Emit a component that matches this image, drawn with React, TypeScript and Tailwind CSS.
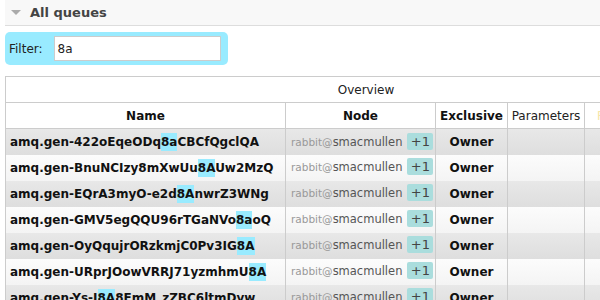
import React from "react";

const rows: [string, string, string][] = [
  ["amq.gen-422oEqeODq", "8a", "CBCfQgclQA"],
  ["amq.gen-BnuNCIzy8mXwUu", "8A", "Uw2MzQ"],
  ["amq.gen-EQrA3myO-e2d", "8A", "nwrZ3WNg"],
  ["amq.gen-GMV5egQQU96rTGaNVo", "8a", "oQ"],
  ["amq.gen-OyQqujrORzkmjC0Pv3IG", "8A", ""],
  ["amq.gen-URprJOowVRRJ71yzmhmU", "8A", ""],
  ["amq.gen-Ys-J", "8A", "8EmM_zZBC6ltmDyw"],
];

export default function App() {
  return (
    <div className="w-[600px] h-[300px] overflow-hidden bg-white text-[12px] font-['DejaVu_Sans',Verdana,sans-serif] text-[#444]">
      {/* --- section header --- */}
      <div className="ml-[5px] h-[26px] flex items-center gap-[9px] pl-[6px] bg-[#f8f8f8] border-b border-[#ddd]">
        <svg width="10" height="6" viewBox="0 0 10 6">
          <polygon points="0,0 10,0 5,5" fill="#aaa" />
        </svg>
        <span className="font-bold text-[13px] text-[#444]">All queues</span>
      </div>

      {/* --- filter --- */}
      <div className="ml-[5px] mt-[6px] w-[223px] h-[33px] rounded-[5px] bg-[#99ebff] flex items-center pl-[4px] gap-[11px]">
        <span className="text-[#222]">Filter:</span>
        <div className="w-[167px] h-[25px] bg-white border border-[#ccc] flex items-center pl-[3px] text-[#222]">
          8a
        </div>
      </div>

      {/* --- table --- */}
      <div className="ml-[5px] mt-[11px]">
        <table className="border-collapse table-fixed w-[800px]">
          <colgroup>
            <col className="w-[280px]" />
            <col className="w-[150px]" />
            <col className="w-[72px]" />
            <col className="w-[77px]" />
            <col className="w-[221px]" />
          </colgroup>
          <thead>
            <tr className="h-[26px]">
              <th colSpan={5} className="border border-[#ccc] font-normal text-[#222] text-left">
                <span className="inline-block w-[720px] text-center">Overview</span>
              </th>
            </tr>
            <tr className="h-[26px]">
              <th className="border border-[#ccc] text-[#111]">Name</th>
              <th className="border border-[#ccc] text-[#111]">Node</th>
              <th className="border border-[#ccc] text-[#111]">Exclusive</th>
              <th className="border border-[#ccc] font-normal text-[#222]">Parameters</th>
              <th className="border border-[#ccc] font-normal text-left pl-[12px] text-[#f5e6a8]">Policy</th>
            </tr>
          </thead>
          <tbody>
            {rows.map(([a, hl, b], i) => (
              <tr
                key={i}
                className={`h-[26px] ${
                  i % 2 === 0
                    ? "bg-gradient-to-b from-[#e8e8e8] to-[#dedede]"
                    : "bg-gradient-to-b from-[#fcfcfc] to-[#f4f4f4]"
                }`}
              >
                <td className="border-x border-[#ccc] pl-[4px] font-bold text-[#111] whitespace-nowrap">
                  {a}
                  <span className="bg-[#99ebff] py-[2px]">{hl}</span>
                  {b}
                </td>
                <td className="border-x border-[#ccc] pl-[5px] whitespace-nowrap">
                  <span className="text-[#999] text-[10.5px]">rabbit@</span>
                  <span className="text-[#555] text-[11.5px]">smacmullen</span>
                  <span className="ml-[5px] inline-block w-[26px] text-center rounded-[2px] bg-[#aadddd] text-[#444] text-[13px] leading-[17px]">+1</span>
                </td>
                <td className="border-x border-[#ccc] text-center font-bold text-[#111]">Owner</td>
                <td className="border-x border-[#ccc]"></td>
                <td className="border-x border-[#ccc]"></td>
              </tr>
            ))}
          </tbody>
        </table>
      </div>
    </div>
  );
}
